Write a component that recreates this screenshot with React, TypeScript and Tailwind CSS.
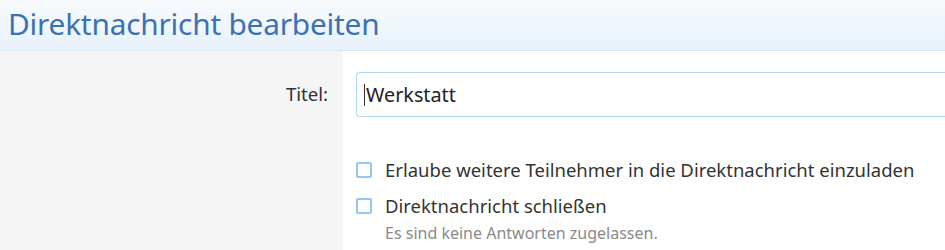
import React from 'react';

const font = { fontFamily: '"Noto Sans", "Open Sans", sans-serif' };

export default function App() {
  return (
    <div className="w-[945px] h-[250px] overflow-hidden bg-white" style={font}>
      <div className="h-[51px] bg-gradient-to-b from-[#f8fbfe] to-[#e7f1fb] border-b border-[#dfe7ee] flex items-center pl-[8px]">
        <h1 className="text-[29.8px] leading-none text-[#3c71b2] tracking-[-0.2px] -mt-[2px]">Direktnachricht bearbeiten</h1>
      </div>
      <div className="flex h-[199px]">
        <div className="w-[343px] bg-[#f5f5f5] flex flex-col items-end pr-[15px] pt-[34px]">
          <label className="text-[18.6px] text-[#333] leading-none">Titel:</label>
        </div>
        <div className="flex-1 pl-[13px] pt-[21px]">
          <div className="h-[45px] border border-r-0 border-[#acd6f6] rounded-l-[4px] flex items-center pl-[7px]">
            <span className="w-px h-[22px] bg-[#333] mr-px" />
            <span className="text-[19.8px] text-[#222]">Werkstatt</span>
          </div>
          <div className="mt-[40px] flex flex-col">
            <div className="flex items-center gap-[13px]">
              <span className="w-[16px] h-[16px] border-2 border-[#94c8f2] rounded-[2px] shrink-0" />
              <span className="text-[18.5px] text-[#333] leading-[26px]">Erlaube weitere Teilnehmer in die Direktnachricht einzuladen</span>
            </div>
            <div className="flex items-center gap-[13px] mt-[10px]">
              <span className="w-[16px] h-[16px] border-2 border-[#94c8f2] rounded-[2px] shrink-0" />
              <span className="text-[18.5px] text-[#333] leading-[26px]">Direktnachricht schließen</span>
            </div>
            <div className="pl-[29px] text-[16px] text-[#8a8a8a] leading-none mt-[6px]">Es sind keine Antworten zugelassen.</div>
          </div>
        </div>
      </div>
    </div>
  );
}
